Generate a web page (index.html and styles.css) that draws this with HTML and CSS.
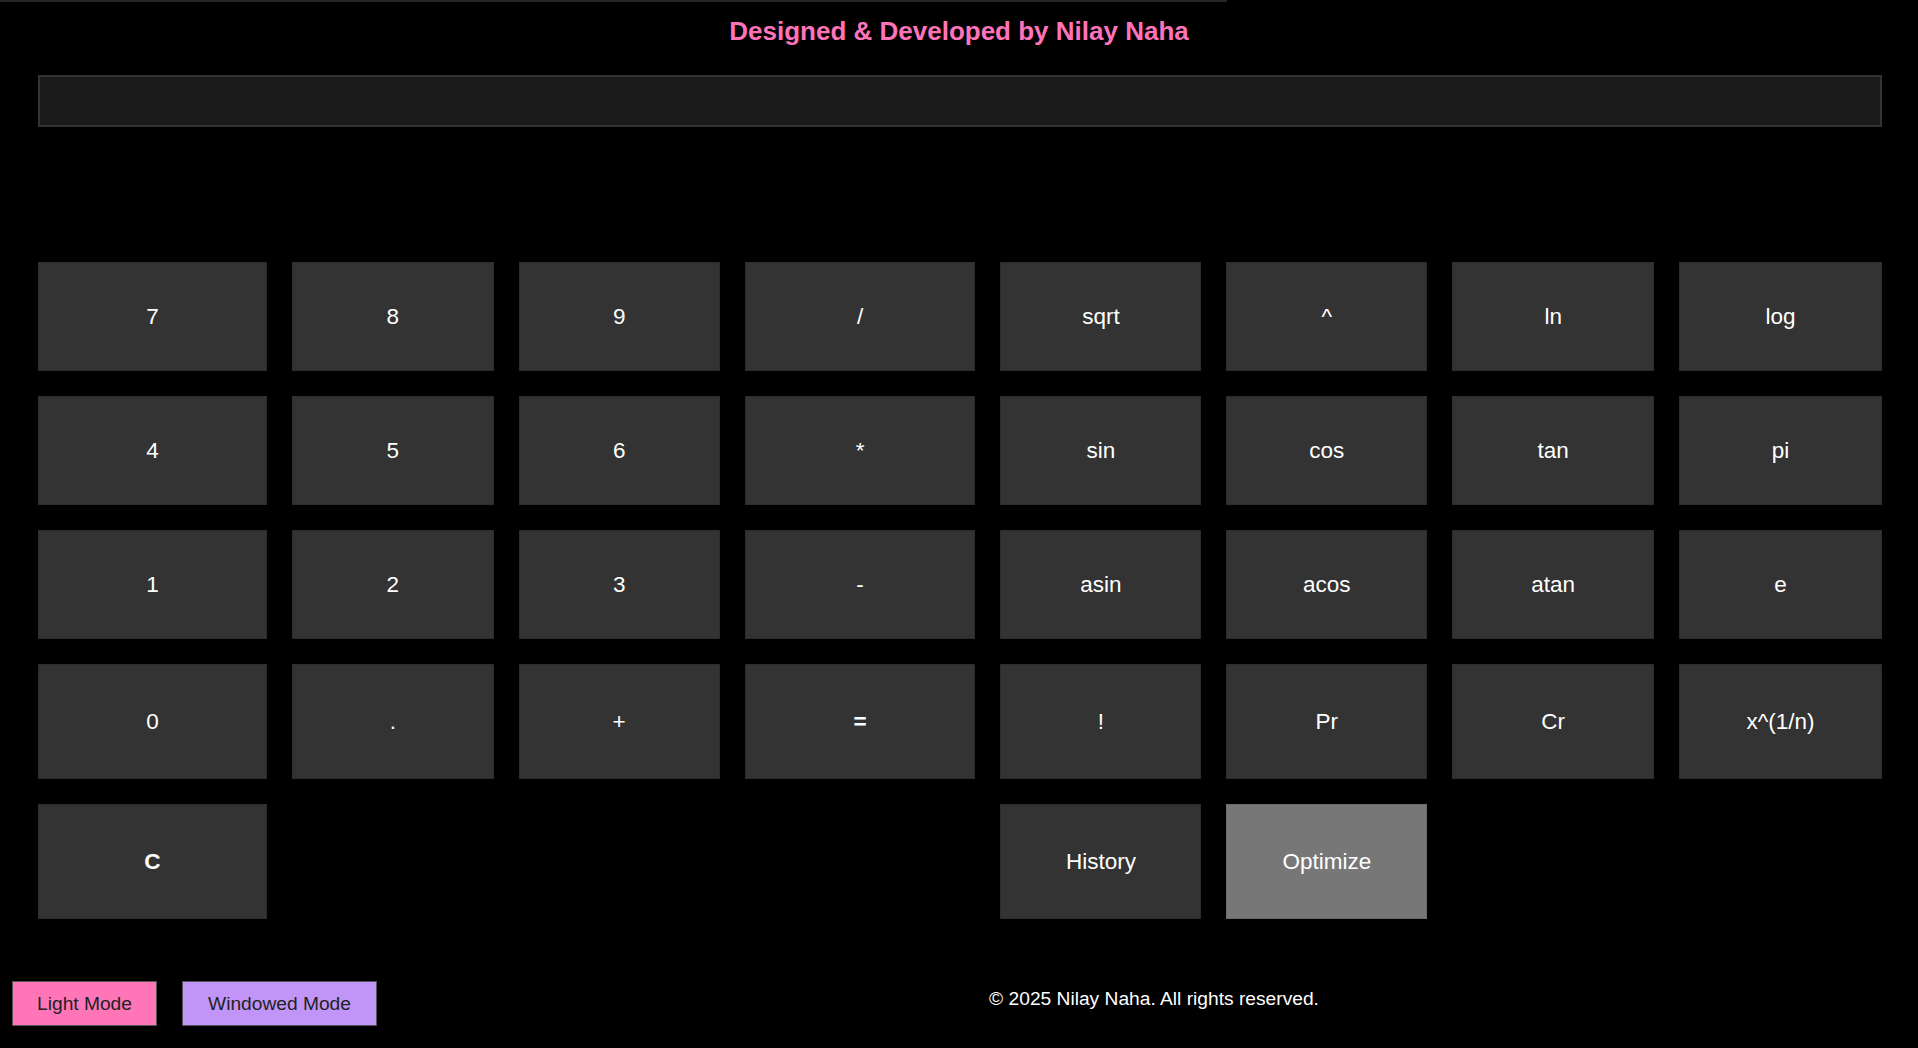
FILE: index.html
```html
<!DOCTYPE html>
<html lang="en">
<head>
<meta charset="utf-8">
<title>Calculator</title>
<link rel="stylesheet" href="styles.css">
</head>
<body>
<div class="topline"></div>
<h1 class="title">Designed &amp; Developed by Nilay Naha</h1>
<main class="calc">
  <input class="display" type="text" value="">
  <div class="result"></div>
  <div class="keys">
    <button class="key">7</button>
    <button class="key">8</button>
    <button class="key">9</button>
    <button class="key">/</button>
    <button class="key">sqrt</button>
    <button class="key">^</button>
    <button class="key">ln</button>
    <button class="key">log</button>

    <button class="key">4</button>
    <button class="key">5</button>
    <button class="key">6</button>
    <button class="key">*</button>
    <button class="key">sin</button>
    <button class="key">cos</button>
    <button class="key">tan</button>
    <button class="key">pi</button>

    <button class="key">1</button>
    <button class="key">2</button>
    <button class="key">3</button>
    <button class="key">-</button>
    <button class="key">asin</button>
    <button class="key">acos</button>
    <button class="key">atan</button>
    <button class="key">e</button>

    <button class="key">0</button>
    <button class="key">.</button>
    <button class="key">+</button>
    <button class="key key-bold">=</button>
    <button class="key">!</button>
    <button class="key">Pr</button>
    <button class="key">Cr</button>
    <button class="key">x^(1/n)</button>

    <button class="key key-bold key-clear">C</button>
    <button class="key key-history">History</button>
    <button class="key key-optimize">Optimize</button>
  </div>
</main>
<footer class="footer">
  <button class="mode-btn mode-light">Light Mode</button>
  <button class="mode-btn mode-window">Windowed Mode</button>
  <p class="copyright">© 2025 Nilay Naha. All rights reserved.</p>
</footer>
</body>
</html>
```

FILE: styles.css
```css
* {
  box-sizing: border-box;
}

html, body {
  margin: 0;
  padding: 0;
  background: #000;
  color: #fff;
  font-family: "Liberation Sans", Arial, sans-serif;
  height: 100%;
  overflow: hidden;
}

.topline {
  width: 1227px;
  height: 2px;
  background: #262626;
}

.title {
  margin: 14px 0 0;
  font-size: 26px;
  line-height: 30px;
  font-weight: bold;
  color: #ff73b9;
  text-align: center;
}

.calc {
  padding: 0 36px 0 38px;
}

.display {
  display: block;
  width: 100%;
  height: 52px;
  margin: 29px 0 0;
  background: #1b1b1b;
  border: 2px solid #333;
  color: #fff;
  font-family: inherit;
  font-size: 24px;
  padding: 0 10px;
  outline: none;
}

.result {
  height: 135px;
}

.keys {
  display: grid;
  grid-template-columns: 229fr 202fr 201fr 231fr 201fr 201fr 202fr 203fr;
  grid-template-rows: 109px 109px 109px 115px 115px;
  gap: 25px;
}

.key {
  background: #333;
  border: 1px solid #2c2c2c;
  color: #fff;
  font-family: inherit;
  font-size: 22.5px;
  padding: 0;
  margin: 0;
  cursor: pointer;
}

.key-bold {
  font-weight: bold;
}

.key-clear {
  grid-column: 1;
}

.key-history {
  grid-column: 5;
}

.key-optimize {
  grid-column: 6;
  background: #777;
  border-color: #6c6c6c;
}

.footer {
  display: flex;
  align-items: flex-start;
  gap: 25px;
  padding: 0 12px;
  margin-top: 62px;
}

.mode-btn {
  height: 45px;
  padding: 0 24px;
  border: 1px solid #555;
  font-family: inherit;
  font-size: 19.2px;
  color: #222;
  cursor: pointer;
}

.mode-light {
  background: #ff75b8;
  width: 145px;
}

.mode-window {
  background: #c195f7;
  width: 195px;
}

.copyright {
  flex: 1;
  margin: 7px 0 0;
  text-align: center;
  font-size: 19.2px;
  line-height: 22px;
  color: #fff;
}
```
